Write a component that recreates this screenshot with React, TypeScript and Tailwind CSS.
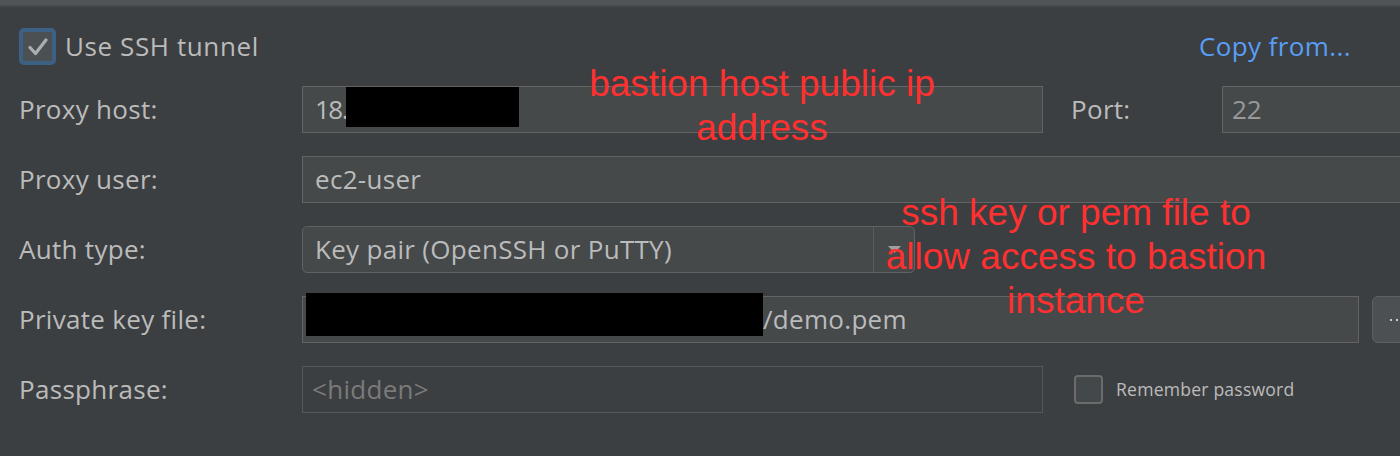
import React from "react";

const font = { fontFamily: '"Open Sans", "Noto Sans", sans-serif' };

function Label({ children }: { children: React.ReactNode }) {
  return (
    <div className="w-[283px] shrink-0 text-[26px] tracking-[0.3px] text-[#bbbbbb]">
      {children}
    </div>
  );
}

export default function App() {
  return (
    <div
      className="relative w-[1400px] h-[456px] overflow-hidden bg-[#3c3f41]"
      style={font}
    >
      <div className="h-[5px] bg-[#505457]" />
      <div className="h-[2px] bg-[#46494c]" />

      <div className="pl-[19px] pt-[21px] flex flex-col">
        {/* Checkbox row */}
        <div className="h-[37px] flex items-center">
          <div className="w-[37px] h-[37px] rounded-[5px] border-[4px] border-[#3d6185] bg-[#4b5053] flex items-center justify-center">
            <svg width="22" height="20" viewBox="0 0 22 20">
              <path
                d="M3 10.5 L8.5 16.5 L19 3"
                fill="none"
                stroke="#a9b0b5"
                strokeWidth="3.2"
                strokeLinecap="round"
                strokeLinejoin="round"
              />
            </svg>
          </div>
          <span className="ml-[9px] text-[26px] tracking-[0.6px] text-[#bbbbbb]">
            Use SSH tunnel
          </span>
          <span className="ml-auto mr-[49px] text-[26px] tracking-[0.4px] text-[#589df6]">
            Copy from...
          </span>
        </div>

        <div className="mt-[21px] flex flex-col gap-[23px]">
          {/* Proxy host */}
          <div className="h-[47px] flex items-center">
            <Label>Proxy host:</Label>
            <div className="w-[741px] h-[47px] shrink-0 border border-[#646464] bg-[#45494a] flex items-start pl-[12px] text-[26px] text-[#bbbbbb]">
              <span className="self-center tracking-[-1.5px]">18.</span>
              <div className="w-[173px] h-[40px] -ml-[1px] bg-black" />
            </div>
            <div className="ml-[28px] w-[151px] shrink-0 text-[26px] tracking-[0.3px] text-[#bbbbbb]">
              Port:
            </div>
            <div className="w-[220px] h-[47px] shrink-0 border border-[#646464] bg-[#45494a] flex items-center pl-[9px] text-[26px] text-[#999999]">
              22
            </div>
          </div>

          {/* Proxy user */}
          <div className="h-[47px] flex items-center">
            <Label>Proxy user:</Label>
            <div className="w-[1120px] h-[47px] shrink-0 border border-[#646464] bg-[#45494a] flex items-center pl-[12px] text-[26px] tracking-[0.3px] text-[#bbbbbb]">
              ec2-user
            </div>
          </div>

          {/* Auth type */}
          <div className="h-[47px] flex items-center">
            <Label>Auth type:</Label>
            <div className="w-[613px] h-[47px] shrink-0 rounded-[5px] border border-[#5f6264] bg-[#45494a] flex items-center text-[26px] tracking-[0.3px] text-[#bbbbbb]">
              <span className="pl-[12px] flex-1">Key pair (OpenSSH or PuTTY)</span>
              <div className="w-[41px] h-full border-l border-[#5a5d5f] flex items-center justify-center">
                <svg width="13" height="7" viewBox="0 0 13 7">
                  <path d="M0 0 H13 L6.5 7 Z" fill="#a0a0a0" />
                </svg>
              </div>
            </div>
          </div>

          {/* Private key */}
          <div className="h-[47px] flex items-center">
            <Label>Private key file:</Label>
            <div className="w-[1057px] h-[47px] shrink-0 border border-[#646464] bg-[#45494a] flex items-start pl-[3px] text-[26px] tracking-[0.3px] text-[#bbbbbb]">
              <div className="w-[457px] h-[43px] -mt-[4px] bg-black shrink-0" />
              <span className="self-center">/demo.pem</span>
            </div>
            <div className="ml-[13px] w-[60px] h-[47px] shrink-0 rounded-[6px] border border-[#5e6163] bg-[#4c5052] flex items-center pl-[17px] gap-[4px]">
              <div className="w-[2px] h-[2px] bg-[#c8c8c8]" />
              <div className="w-[2px] h-[2px] bg-[#c8c8c8]" />
              <div className="w-[2px] h-[2px] bg-[#c8c8c8]" />
            </div>
          </div>

          {/* Passphrase */}
          <div className="h-[47px] flex items-center">
            <Label>Passphrase:</Label>
            <div className="w-[741px] h-[47px] shrink-0 border border-[#555859] bg-[#3c3f41] flex items-center pl-[9px] text-[26px] tracking-[0.3px] text-[#7a7a7a]">
              &lt;hidden&gt;
            </div>
            <div className="ml-[31px] w-[29px] h-[29px] shrink-0 rounded-[4px] border-[2px] border-[#6b6b6b] bg-[#43484a]" />
            <span className="ml-[13px] text-[17.6px] tracking-[0.2px] text-[#bbbbbb]">
              Remember password
            </span>
          </div>
        </div>
      </div>

      {/* Annotations overlay */}
      <div
        className="absolute left-[762px] top-[62px] -translate-x-1/2 text-center whitespace-nowrap text-[37px] leading-[44px] text-[#ff3030]"
        style={{ fontFamily: '"Liberation Sans", Arial, sans-serif' }}
      >
        bastion host public ip
        <br />
        address
      </div>
      <div
        className="absolute left-[1076px] top-[191px] -translate-x-1/2 text-center whitespace-nowrap text-[37px] leading-[44px] text-[#ff3030]"
        style={{ fontFamily: '"Liberation Sans", Arial, sans-serif' }}
      >
        ssh key or pem file to
        <br />
        allow access to bastion
        <br />
        instance
      </div>
    </div>
  );
}
